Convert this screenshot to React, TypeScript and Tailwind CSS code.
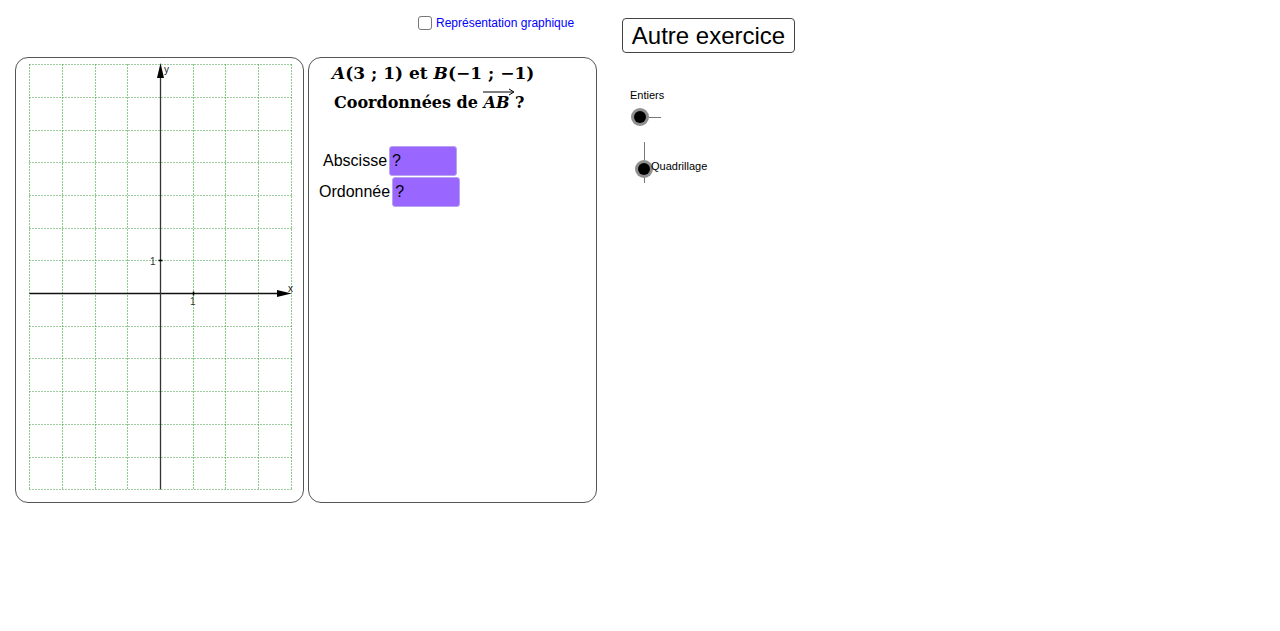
import React from 'react';

const ORIGIN_X = 160;
const ORIGIN_Y = 292;
const UNIT = 32.7;

const px = (v: number) => Math.round(v) + 0.5;

const GraphPanel: React.FC = () => {
  const cols = [-4, -3, -2, -1, 0, 1, 2, 3, 4];
  const rows = [-7, -6, -5, -4, -3, -2, -1, 0, 1, 2, 3, 4, 5, 6];
  const left = px(ORIGIN_X - 4 * UNIT);
  const right = px(ORIGIN_X + 4 * UNIT);
  const top = px(ORIGIN_Y - 7 * UNIT);
  const bottom = px(ORIGIN_Y + 6 * UNIT);
  const ox = px(ORIGIN_X);
  const oy = px(ORIGIN_Y);

  return (
    <div className="w-[289px] h-[446px] border border-[#555] rounded-[13px] overflow-hidden bg-white">
      <svg width="289" height="446" viewBox="16 57 289 446" className="block">
        {cols.map(c => (
          <line
            key={'v' + c}
            x1={px(ORIGIN_X + c * UNIT)}
            x2={px(ORIGIN_X + c * UNIT)}
            y1={top}
            y2={bottom}
            stroke="#139a13"
            strokeWidth="1"
            strokeDasharray="1 2"
          />
        ))}
        {rows.map(r => (
          <line
            key={'h' + r}
            x1={left}
            x2={right}
            y1={px(ORIGIN_Y + r * UNIT)}
            y2={px(ORIGIN_Y + r * UNIT)}
            stroke="#3f9a3f"
            strokeWidth="1"
            strokeDasharray="1 2"
          />
        ))}
        {/* axes */}
        <line x1={left} x2={280} y1={oy} y2={oy} stroke="#111" strokeWidth="1.3" />
        <line x1={ox} x2={ox} y1={bottom} y2={74} stroke="#333" strokeWidth="1.3" />
        <polygon points={`${right},${oy} 277,${oy - 3.5} 277,${oy + 3.5}`} fill="#000" />
        <polygon points={`${ox},62 ${ox - 3.5},77 ${ox + 3.5},77`} fill="#000" />
        {/* ticks */}
        <line x1={ox - 2} x2={ox + 2} y1={px(ORIGIN_Y - UNIT)} y2={px(ORIGIN_Y - UNIT)} stroke="#000" strokeWidth="1.5" />
        <line x1={px(ORIGIN_X + UNIT)} x2={px(ORIGIN_X + UNIT)} y1={oy - 2} y2={oy + 2} stroke="#000" strokeWidth="1.5" />
        <text x={150} y={264} fontSize="10" fontFamily="Liberation Sans, sans-serif" fill="#333">1</text>
        <text x={190} y={304} fontSize="10" fontFamily="Liberation Sans, sans-serif" fill="#333">1</text>
        <text x={288} y={291} fontSize="10" fontFamily="Liberation Sans, sans-serif" fill="#222">x</text>
        <text x={164} y={72} fontSize="10" fontFamily="Liberation Sans, sans-serif" fill="#222">y</text>
      </svg>
    </div>
  );
};

const AnswerBox: React.FC = () => (
  <span className="inline-flex items-center w-[68px] h-[30px] bg-[#9966ff] border border-[#b9a3f0] rounded-[3px] pl-[2px] text-[16px] text-black">
    ?
  </span>
);

const QuestionPanel: React.FC = () => (
  <div className="w-[289px] h-[446px] border border-[#555] rounded-[13px] bg-white text-black">
    <div className="pl-[23px] pt-[3px] font-['DejaVu_Serif',serif] font-bold text-[17px] leading-[24px]">
      <i>A</i>(3 ; 1) et <i>B</i>(−1 ; −1)
    </div>
    <div className="pl-[25px] pt-[7px] font-['DejaVu_Serif',serif] font-bold text-[16px] leading-[22px]">
      Coordonnées de{' '}
      <span className="relative inline-block">
        <i>AB</i>
        <svg width="34" height="8" viewBox="0 0 34 8" className="absolute left-[-2px] top-[-4px]">
          <line x1="1" y1="4" x2="31" y2="4" stroke="#000" strokeWidth="1" />
          <path d="M27 1 L32 4 L27 7" fill="none" stroke="#000" strokeWidth="1" />
        </svg>
      </span>{' '}
      ?
    </div>
    <div className="mt-[32px] flex flex-col gap-[1px] font-['Liberation_Sans',sans-serif] text-[16px]">
      <div className="flex items-center pl-[14px]">
        <span className="mr-[2px]">Abscisse</span>
        <AnswerBox />
      </div>
      <div className="flex items-center pl-[10px]">
        <span className="mr-[2px]">Ordonnée</span>
        <AnswerBox />
      </div>
    </div>
  </div>
);

const SliderDot: React.FC = () => (
  <span className="block w-[18px] h-[18px] rounded-full bg-[#8f8f8f] p-[3px]">
    <span className="block w-full h-full rounded-full bg-black" />
  </span>
);

const Sliders: React.FC = () => (
  <div className="ml-[29px] pt-[32px] font-['Liberation_Sans',sans-serif] text-[11px] text-black">
    <div className="leading-[13px]">Entiers</div>
    <div className="flex items-center mt-[6px] pl-[1px]">
      <SliderDot />
      <span className="block w-[12px] h-px bg-[#777]" />
    </div>
    <div className="relative mt-[16px] ml-[5px] w-[120px] h-[42px]">
      <span className="absolute left-[9px] top-0 w-px h-[41px] bg-[#777]" />
      <span className="absolute left-0 top-[18px]">
        <SliderDot />
      </span>
      <span className="absolute left-[16px] top-[18px] leading-[13px]">Quadrillage</span>
    </div>
  </div>
);

const App: React.FC = () => {
  return (
    <div className="w-[1280px] h-[631px] bg-white overflow-hidden font-['Liberation_Sans',sans-serif]">
      <div className="flex items-start pt-[16px] pl-[418px] h-[57px]">
        <label className="flex items-center gap-[4px] w-[204px] text-[12px] text-[#0000ff] h-[14px] whitespace-nowrap">
          <span className="block shrink-0 w-[14px] h-[14px] border border-[#777] rounded-[3px] bg-white" />
          Représentation graphique
        </label>
        <button className="mt-[2px] w-[173px] h-[35px] border border-[#444] rounded-[4px] bg-white text-[24px] text-black leading-none">
          Autre exercice
        </button>
      </div>
      <div className="flex items-start pl-[15px] gap-[4px]">
        <GraphPanel />
        <QuestionPanel />
        <Sliders />
      </div>
    </div>
  );
};

export default App;
